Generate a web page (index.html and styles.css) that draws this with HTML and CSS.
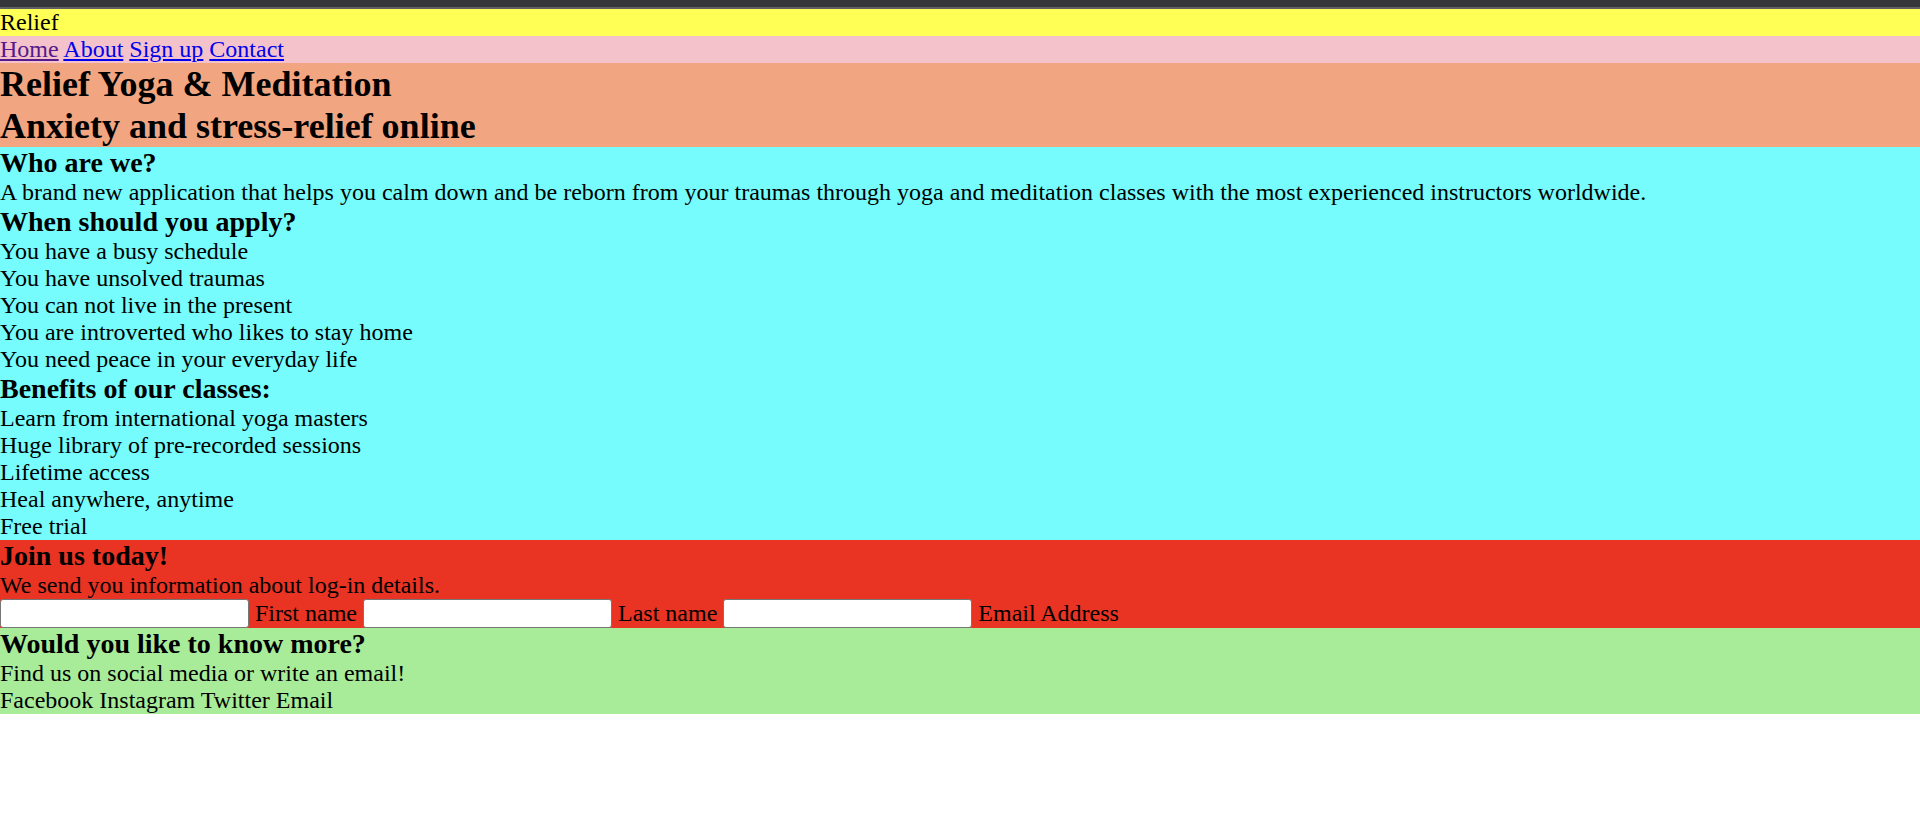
FILE: index.html
```html
<!DOCTYPE html>
<html lang="en">
<head>
<meta charset="utf-8">
<title>Relief</title>
<link rel="stylesheet" href="styles.css">
</head>
<body>
<div class="chrome"></div>
<header class="brand">Relief</header>
<nav class="nav">
  <a href="#" class="visited">Home</a> <a href="#">About</a> <a href="#">Sign up</a> <a href="#">Contact</a>
</nav>
<section class="hero">
  <h1 class="hero-title">Relief Yoga &amp; Meditation</h1>
  <h1 class="hero-title">Anxiety and stress-relief online</h1>
</section>
<main class="info">
  <h3 class="heading">Who are we?</h3>
  <p class="text">A brand new application that helps you calm down and be reborn from your traumas through yoga and meditation classes with the most experienced instructors worldwide.</p>
  <h3 class="heading">When should you apply?</h3>
  <ul class="list">
    <li>You have a busy schedule</li>
    <li>You have unsolved traumas</li>
    <li>You can not live in the present</li>
    <li>You are introverted who likes to stay home</li>
    <li>You need peace in your everyday life</li>
  </ul>
  <h3 class="heading">Benefits of our classes:</h3>
  <ul class="list">
    <li>Learn from international yoga masters</li>
    <li>Huge library of pre-recorded sessions</li>
    <li>Lifetime access</li>
    <li>Heal anywhere, anytime</li>
    <li>Free trial</li>
  </ul>
</main>
<section class="join">
  <h3 class="heading">Join us today!</h3>
  <p class="text">We send you information about log-in details.</p>
  <form class="form-row">
    <input class="field" type="text"><label class="label">First name</label>
    <input class="field" type="text"><label class="label">Last name</label>
    <input class="field" type="text"><label class="label">Email Address</label>
  </form>
</section>
<footer class="more">
  <h3 class="heading">Would you like to know more?</h3>
  <p class="text">Find us on social media or write an email!</p>
  <p class="text">Facebook Instagram Twitter Email</p>
</footer>
</body>
</html>
```
FILE: styles.css
```css
html, body {
  margin: 0;
  padding: 0;
  background: #ffffff;
}
body {
  font-family: "Liberation Serif", "Times New Roman", serif;
  font-size: 24px;
  line-height: 27px;
  color: #000000;
}
.chrome {
  height: 7px;
  background: #35363a;
  border-bottom: 2px solid #5f6064;
}
.brand {
  background: #ffff55;
  height: 27px;
}
.nav {
  background: #f4c2cb;
  height: 27px;
}
.nav a {
  color: #0000ee;
  text-decoration: underline;
}
.nav a.visited {
  color: #551a8b;
}
.hero {
  background: #f2a581;
}
.hero-title {
  margin: 0;
  font-size: 36px;
  line-height: 42px;
  font-weight: bold;
}
.info {
  background: #76fcfd;
  display: block;
}
.heading {
  margin: 0;
  font-size: 28px;
  line-height: 32px;
  font-weight: bold;
}
.text {
  margin: 0;
}
.list {
  margin: 0;
  padding: 0;
  list-style: none;
}
.join {
  background: #e93323;
}
.form-row {
  display: flex;
  align-items: center;
  gap: 6px;
  height: 29px;
  margin: 0;
}
.field {
  box-sizing: border-box;
  width: 249px;
  height: 29px;
  margin: 0;
  border: 1px solid #767676;
  border-radius: 3px;
  background: #ffffff;
  padding: 1px 3px;
}
.label {
  font-size: 24px;
}
.more {
  background: #a8ec99;
}
```
